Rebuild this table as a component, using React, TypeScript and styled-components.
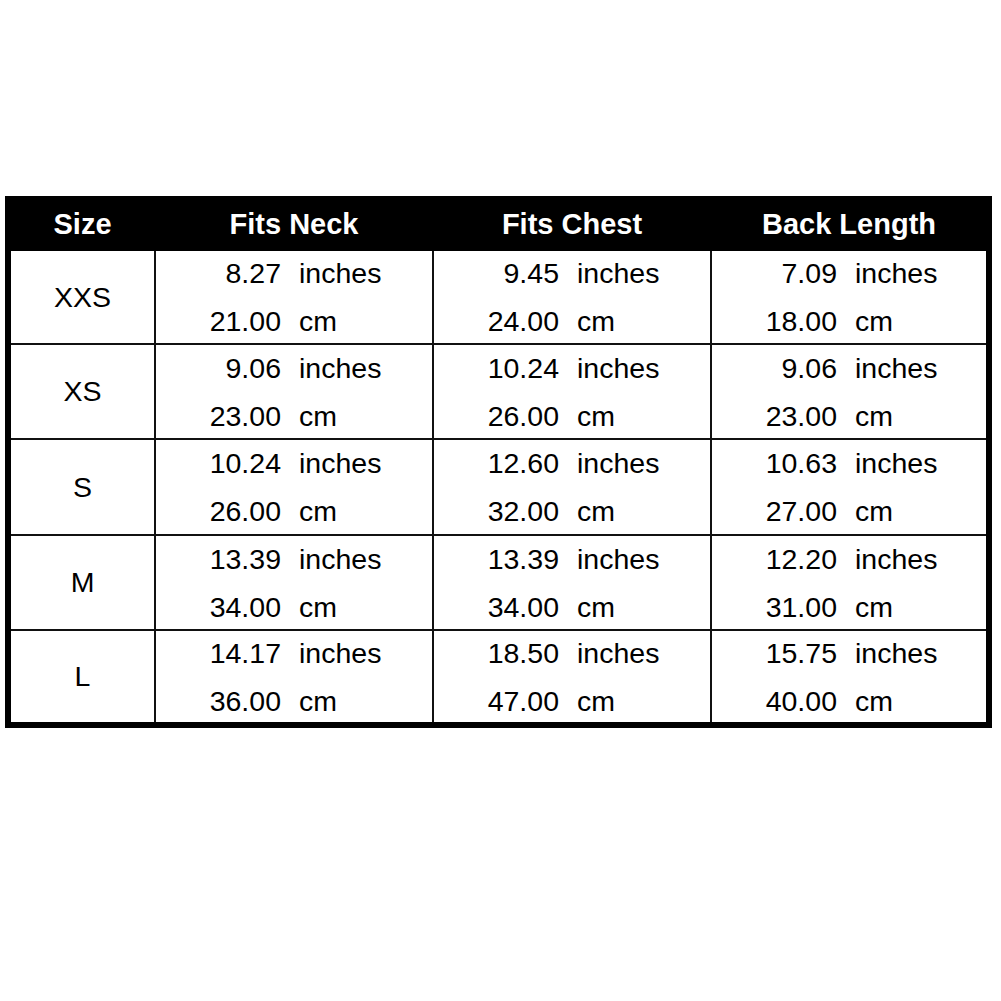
import React from "react";
import styled, { createGlobalStyle } from "styled-components";

type SIZE_ROW = {
  size: string;
  neck: [string, string];
  chest: [string, string];
  back: [string, string];
  height: number;
};

const rows: SIZE_ROW[] = [
  { size: "XXS", neck: ["8.27", "21.00"], chest: ["9.45", "24.00"], back: ["7.09", "18.00"], height: 92 },
  { size: "XS", neck: ["9.06", "23.00"], chest: ["10.24", "26.00"], back: ["9.06", "23.00"], height: 93 },
  { size: "S", neck: ["10.24", "26.00"], chest: ["12.60", "32.00"], back: ["10.63", "27.00"], height: 94 },
  { size: "M", neck: ["13.39", "34.00"], chest: ["13.39", "34.00"], back: ["12.20", "31.00"], height: 93 },
  { size: "L", neck: ["14.17", "36.00"], chest: ["18.50", "47.00"], back: ["15.75", "40.00"], height: 91 },
];

const GlobalStyle = createGlobalStyle`
  html, body {
    margin: 0;
    padding: 0;
    background: #ffffff;
  }
  body {
    font-family: "Liberation Sans", Arial, sans-serif;
    color: #000000;
  }
`;

const Page = styled.main`
  width: 1001px;
  height: 1001px;
  padding-top: 196px;
  padding-left: 5px;
  box-sizing: border-box;
`;

const Table = styled.section`
  width: 987px;
  box-sizing: border-box;
  border: 6px solid #000000;
  background: #000000;
`;

const COLUMNS = "143px 276px 276px 274px";

const HeaderRow = styled.div`
  display: grid;
  grid-template-columns: ${COLUMNS};
  column-gap: 2px;
  height: 49px;
  background: #000000;
`;

const HeaderCell = styled.div`
  display: flex;
  align-items: center;
  justify-content: center;
  color: #ffffff;
  font-weight: bold;
  font-size: 29px;
  padding-bottom: 5px;
`;

const Body = styled.div`
  display: grid;
  row-gap: 2px;
  background: #111111;
`;

const Row = styled.div<{ $height: number }>`
  display: grid;
  grid-template-columns: ${COLUMNS};
  grid-template-rows: minmax(0, 1fr);
  column-gap: 2px;
  height: ${(props) => props.$height}px;
`;

const SizeCell = styled.div`
  display: flex;
  align-items: center;
  justify-content: center;
  background: #ffffff;
  font-size: 28.5px;
`;

const ValueCell = styled.div`
  display: grid;
  grid-template-columns: 125px auto;
  column-gap: 18px;
  align-content: center;
  background: #ffffff;
  font-size: 28.5px;
  line-height: 48px;
  min-height: 0;
`;

const Amount = styled.span`
  text-align: right;
`;

const Unit = styled.span`
  text-align: left;
`;

function Values({ pair }: { pair: [string, string] }): JSX.Element {
  return (
    <ValueCell>
      <Amount>{pair[0]}</Amount>
      <Unit>inches</Unit>
      <Amount>{pair[1]}</Amount>
      <Unit>cm</Unit>
    </ValueCell>
  );
}

export default function App(): JSX.Element {
  return (
    <Page>
      <GlobalStyle />
      <Table>
        <HeaderRow>
          <HeaderCell>Size</HeaderCell>
          <HeaderCell>Fits Neck</HeaderCell>
          <HeaderCell>Fits Chest</HeaderCell>
          <HeaderCell>Back Length</HeaderCell>
        </HeaderRow>
        <Body>
          {rows.map((row, index) => {
            return (
              <Row $height={row.height} key={index}>
                <SizeCell>{row.size}</SizeCell>
                <Values pair={row.neck} />
                <Values pair={row.chest} />
                <Values pair={row.back} />
              </Row>
            );
          })}
        </Body>
      </Table>
    </Page>
  );
}
